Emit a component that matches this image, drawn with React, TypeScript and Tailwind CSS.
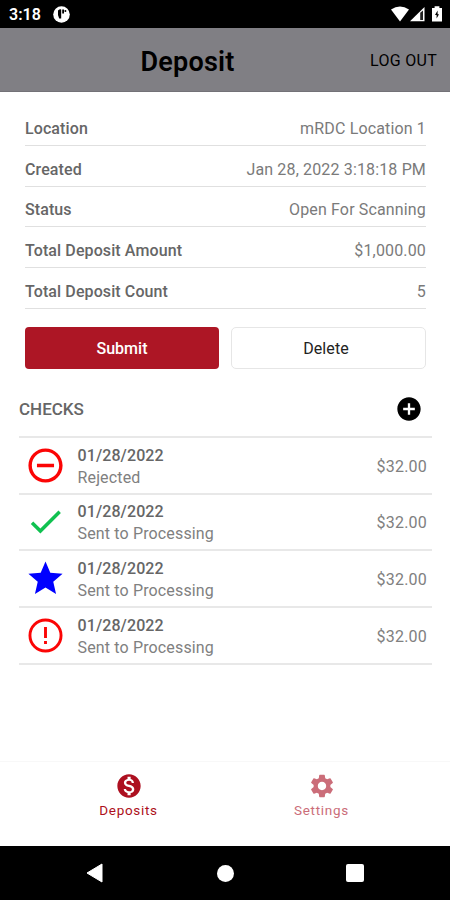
import {
  MdAddCircle,
  MdCheck,
  MdMonetizationOn,
  MdRemoveCircleOutline,
  MdSettings,
  MdStar,
} from "react-icons/md";

const details = [
  { label: "Location", value: "mRDC Location 1" },
  { label: "Created", value: "Jan 28, 2022 3:18:18 PM" },
  { label: "Status", value: "Open For Scanning" },
  { label: "Total Deposit Amount", value: "$1,000.00" },
  { label: "Total Deposit Count", value: "5" },
];

function AlertCircle() {
  return (
    <svg className="h-[41px] w-[41px]" viewBox="0 0 24 24" fill="none">
      <circle cx="12" cy="12" r="9.1" stroke="#fb0505" strokeWidth="1.7" />
      <path d="M12 7 V13.4 M12 15.2 V17" stroke="#fb0505" strokeWidth="1.7" />
    </svg>
  );
}

const checks = [
  { icon: <MdRemoveCircleOutline size={41} color="#fb0505" />, status: "Rejected" },
  { icon: <MdCheck size={41} color="#10c150" />, status: "Sent to Processing" },
  { icon: <MdStar size={41} color="#0000ff" />, status: "Sent to Processing" },
  { icon: <AlertCircle />, status: "Sent to Processing" },
];

function StatusBar() {
  return (
    <div className="flex h-7 shrink-0 items-center bg-black pl-[9px] pr-[8px] text-white">
      <span className="pt-[2px] text-[16px] font-semibold leading-none">3:18</span>
      <svg className="ml-3 mt-px h-[17px] w-[17px]" viewBox="0 0 17 17">
        <circle cx="8.5" cy="8.5" r="8.3" fill="#fff" />
        <path d="M5 4.4 Q6.4 3.2 8.2 3.4 V12.6 H6.2 Q4.4 9 5 4.4 Z" fill="#000" />
        <path d="M9.2 3.6 H11 V7.4 H9.2 Z" fill="#000" />
        <circle cx="12.4" cy="5" r="1" fill="#000" />
      </svg>

      <div className="ml-auto flex items-center">
        <svg className="h-4 w-[18px]" viewBox="0 0 18 16">
          <path d="M0 3.6 Q9 -2.6 18 3.6 L9 15.4 Z" fill="#fff" />
        </svg>
        <svg className="ml-px h-4 w-[15px]" viewBox="0 0 15 16">
          <path d="M0 15.2 L14.5 1 V15.2 Z" fill="#fff" />
          <path d="M10.2 6.8 L13 4.6 V14 H10.2 Z" fill="#222" />
        </svg>
        <svg className="ml-[7px] h-4 w-[10px]" viewBox="0 0 10 16">
          <path d="M0 2 H2.6 V0.3 H7.4 V2 H10 V15.5 H0 Z" fill="#fff" />
          <path d="M5.6 4.6 L3 9 H4.6 V12.6 L7 8.2 H5.6 Z" fill="#000" />
        </svg>
      </div>
    </div>
  );
}

export default function App() {
  return (
    <div className="flex h-[900px] w-[450px] flex-col bg-white font-['Roboto','Liberation_Sans',sans-serif] text-[#666]">
      <StatusBar />

      {/* Header */}
      <header className="grid h-16 shrink-0 grid-cols-[1fr_auto_1fr] items-center border-b border-[#737277] bg-[#807f84] pl-[12px] pr-[13px] text-black">
        <h1 className="col-start-2 -ml-[74px] pt-[6px] text-[27px] font-semibold tracking-[0.2px]">
          Deposit
        </h1>
        <button className="justify-self-end pt-[3px] text-[16px] tracking-[0.3px]">
          LOG OUT
        </button>
      </header>

      {/* Deposit details */}
      <section className="pl-[25px] pr-[24px] pt-[13px]">
        {details.map((row) => (
          <div
            key={row.label}
            className="flex h-[40.75px] items-end justify-between border-b border-[#e0e0e0] pb-[4px] text-[16px] leading-6"
          >
            <span className="font-medium tracking-[0.1px]">{row.label}</span>
            <span className="tracking-[0.15px] text-[#7a7a7a]">{row.value}</span>
          </div>
        ))}

        <div className="mt-[18px] grid grid-cols-[194px_195px] justify-between">
          <button className="h-[42px] rounded-[4px] bg-[#ad1625] pt-[2px] text-[16px] font-medium text-white">
            Submit
          </button>
          <button className="h-[42px] rounded-[5px] border-[1.5px] border-[#e6e6e6] pt-[2px] pr-[10px] pl-[5px] text-[16px] tracking-[0.1px] text-[#222]">
            Delete
          </button>
        </div>
      </section>

      {/* Checks */}
      <section className="mt-[12px] pl-[19px] pr-[18px]">
        <div className="flex h-[57px] items-center justify-between border-b-2 border-[#e8e8e8] pr-[9px]">
          <h2 className="pt-[3px] text-[17px] font-medium">CHECKS</h2>
          <MdAddCircle className="mt-[2px]" size={28} color="#000" />
        </div>
        {checks.map((check, i) => (
          <div
            key={i}
            className="flex h-[56.8px] items-center border-b-2 border-[#e8e8e8] pl-[5.5px] pr-[5px]"
          >
            {check.icon}
            <div className="ml-[12px] pt-[3px] text-[16px] leading-[22px]">
              <div className="font-medium tracking-[0.1px]">01/28/2022</div>
              <div className="tracking-[0.15px] text-[#808080]">{check.status}</div>
            </div>
            <span className="ml-auto pt-[3px] text-[16px] tracking-[0.2px] text-[#808080]">
              $32.00
            </span>
          </div>
        ))}
      </section>

      {/* Tab bar */}
      <nav className="mt-auto flex h-[85px] shrink-0 justify-center border-t border-[#f8f8f8] pt-[10px] text-[13.5px] tracking-[0.7px]">
        <button className="flex w-[193px] flex-col items-center text-[#ad1020]">
          <MdMonetizationOn size={28} />
          <span>Deposits</span>
        </button>
        <button className="flex w-[193px] flex-col items-center text-[#cb6d79]">
          <MdSettings size={28} />
          <span>Settings</span>
        </button>
      </nav>

      {/* Android navigation */}
      <div className="flex h-[54px] shrink-0 items-center justify-between bg-black px-[86px]">
        <svg className="h-5 w-[17px]" viewBox="0 0 17 20">
          <path d="M16 1 V19 L1 10 Z" fill="#fff" stroke="#fff" strokeLinejoin="round" />
        </svg>
        <div className="ml-[2px] h-[17px] w-[17px] rounded-full bg-white" />
        <div className="h-[18px] w-[18px] rounded-[2px] bg-white" />
      </div>
    </div>
  );
}
